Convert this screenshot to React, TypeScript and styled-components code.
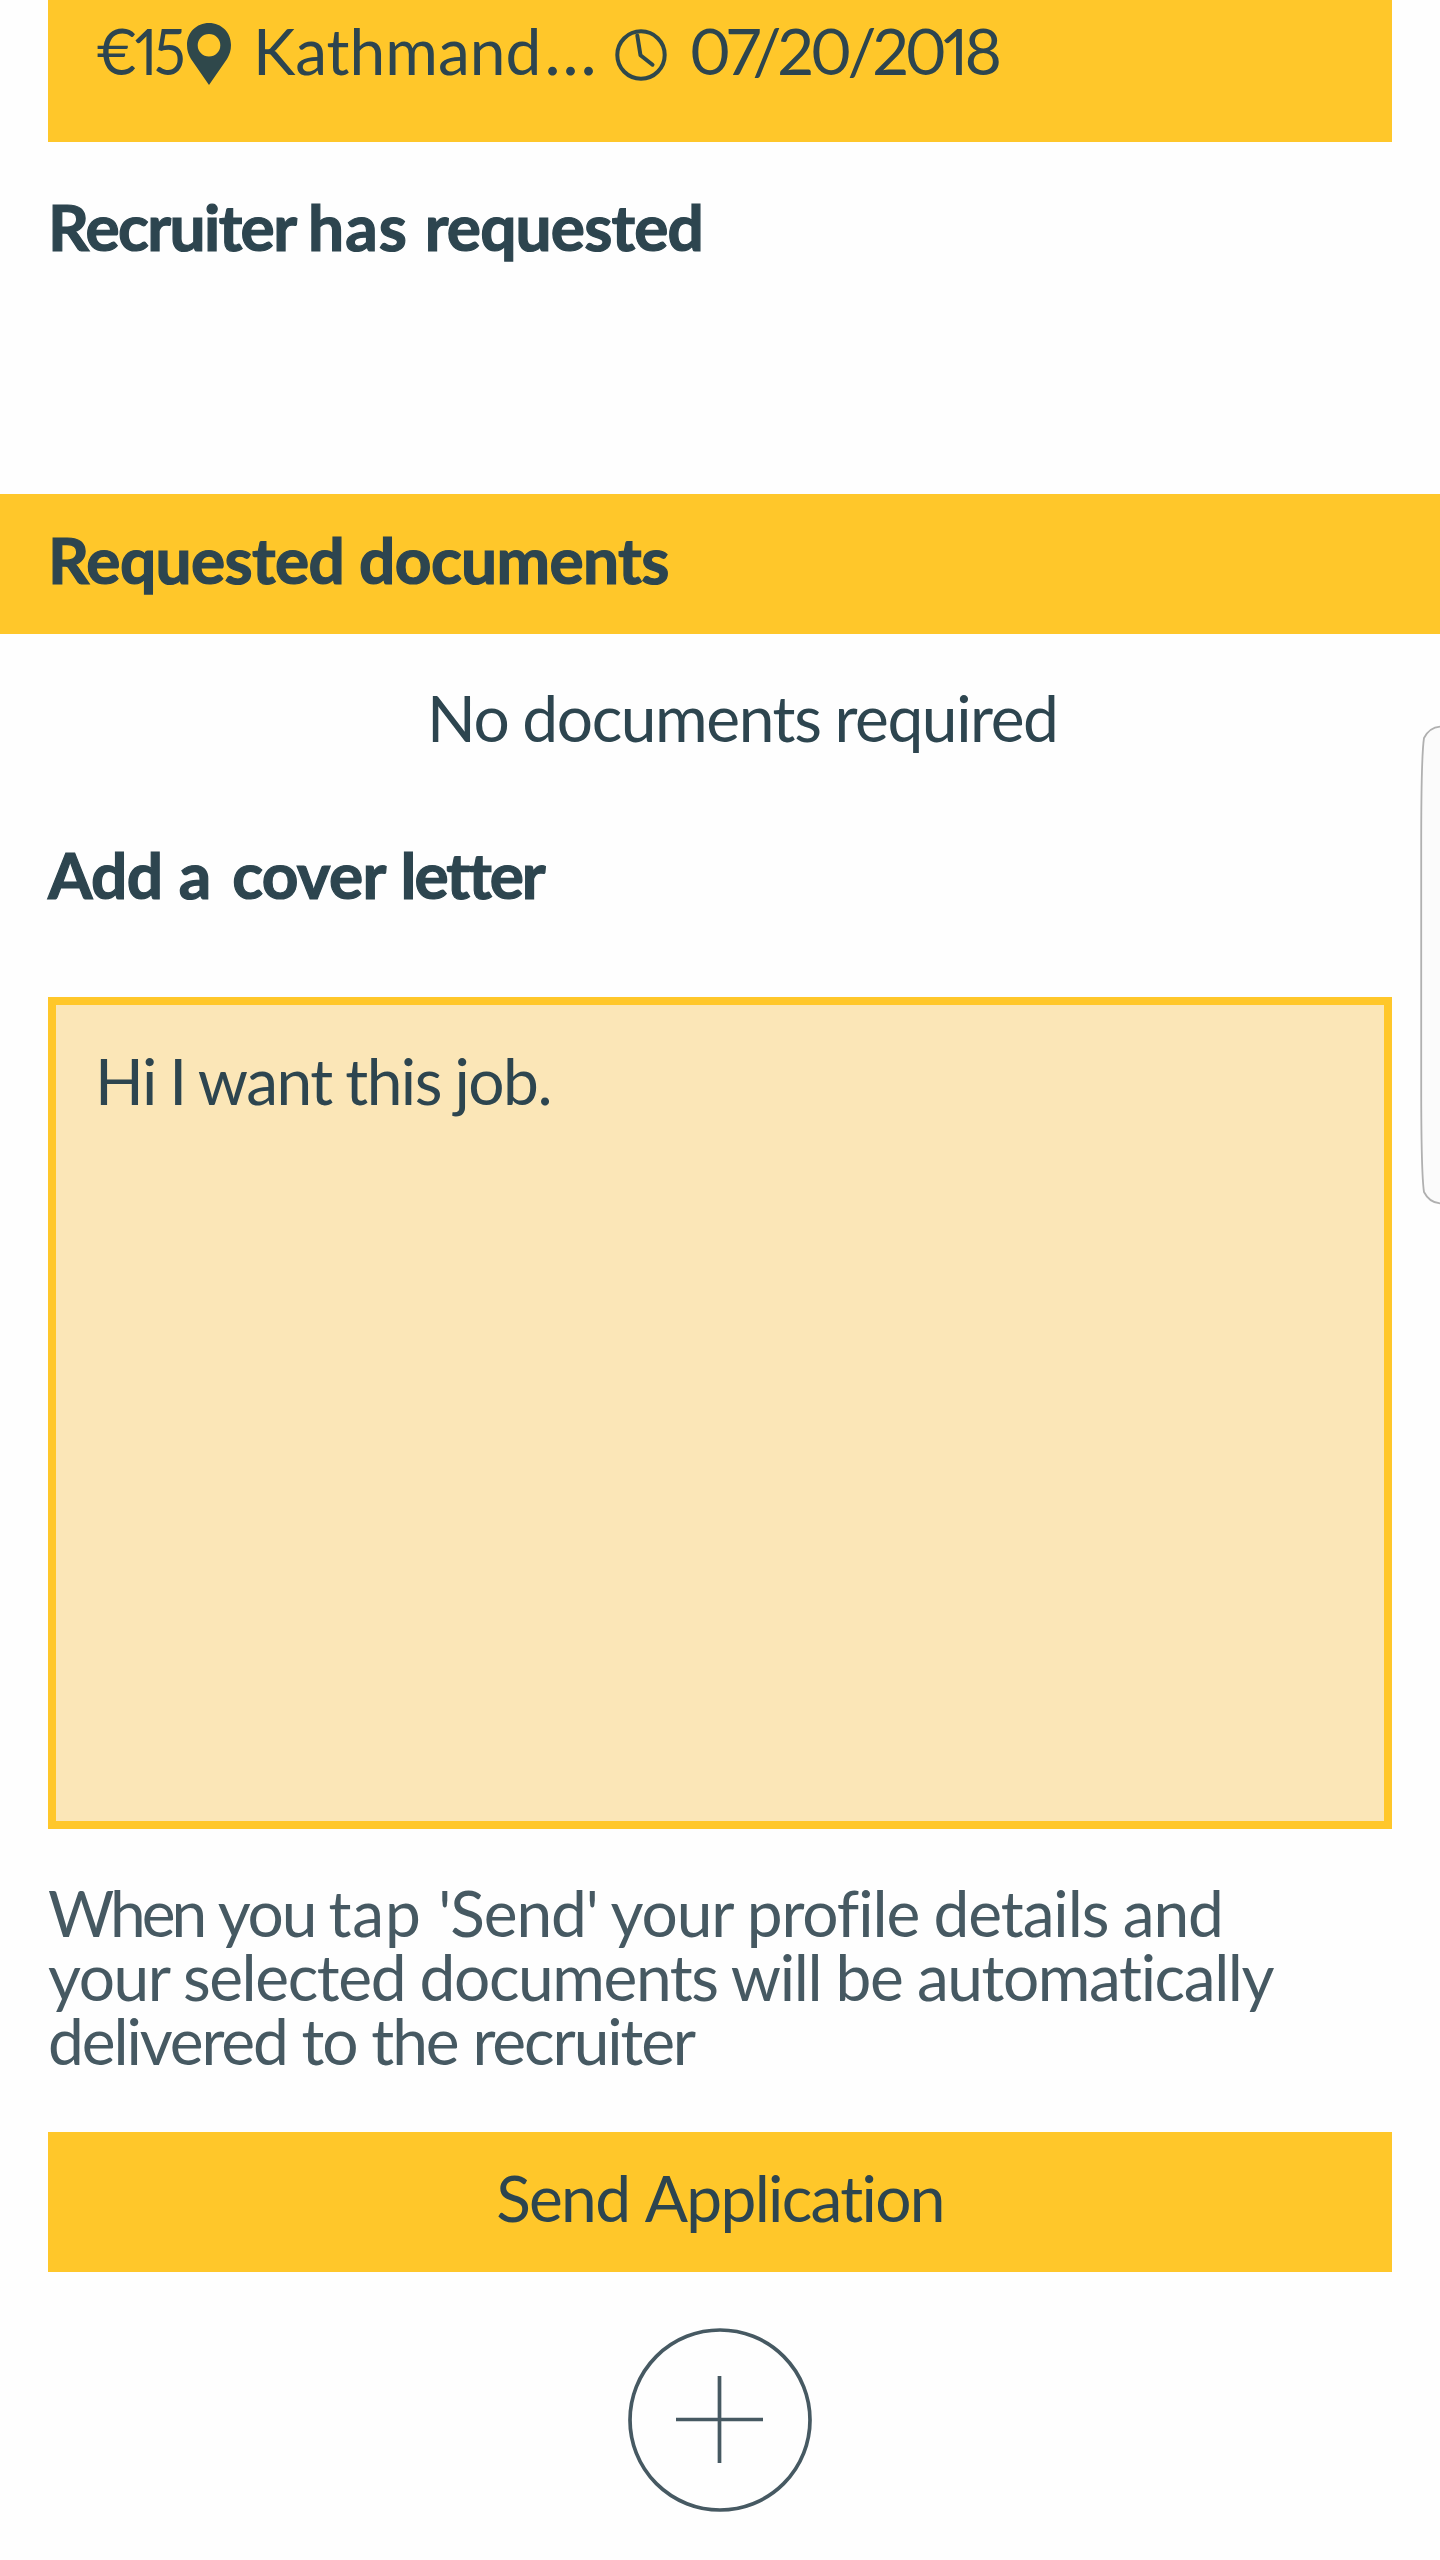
import React from "react";
import styled, { createGlobalStyle } from "styled-components";

const yellow = "#ffc72a";
const ink = "#2d454f";
const slate = "#465962";

const GlobalStyle = createGlobalStyle`
  * { box-sizing: border-box; }
  body { margin: 0; background: #fefefe; }
`;

const Screen = styled.main`
  position: relative;
  display: flex;
  flex-direction: column;
  width: 1440px;
  height: 2560px;
  overflow: hidden;
  background: #fefefe;
  color: ${ink};
  font-family: Lato, "Open Sans", sans-serif;
  font-size: 64px;
  line-height: 64px;
  font-variant-ligatures: none;
  font-variant-numeric: proportional-nums;
`;

const Run = styled.span<{ $track?: number; $gap?: number }>`
  display: block;
  white-space: pre;
  letter-spacing: ${(p) => p.$track ?? 0}px;
  word-spacing: ${(p) => p.$gap ?? 0}px;
`;

const Part = styled.span<{ $track: number }>`
  letter-spacing: ${(p) => p.$track}px;
`;

const Dots = styled.span`
  padding-left: 3px;
  font-size: 70px;
  line-height: 0;
`;

const JobCard = styled.section`
  display: flex;
  align-items: flex-start;
  height: 142px;
  margin: 0 48px;
  padding: 19px 48px 0;
  background: ${yellow};
`;

const Price = styled.div`
  width: 91px;
  transform: scaleX(0.91);
  transform-origin: -10px 0;
`;

const Place = styled.div`
  display: flex;
  width: 428px;
`;

const PlaceName = styled.div`
  padding-left: 22px;
`;

const DateBox = styled.div`
  display: flex;
  gap: 22px;
`;

const PinIcon = styled.svg`
  flex: none;
  width: 44px;
  height: 62px;
  margin-top: 4px;
`;

const ClockIcon = styled.svg`
  flex: none;
  width: 52px;
  height: 52px;
  margin-top: 10px;
`;

const Heading = styled.h2`
  margin: 0;
  padding: 53px 48px 0;
  font-size: 64px;
  font-weight: 700;
  -webkit-text-stroke: 1.2px ${ink};
`;

const Band = styled.h2`
  height: 140px;
  margin: 235px 0 0;
  padding: 34px 48px 0;
  background: ${yellow};
  font-size: 64px;
  font-weight: 700;
  -webkit-text-stroke: 1.2px ${ink};
`;

const Empty = styled.p`
  display: flex;
  margin: 0;
  padding: 52px 0 40px 427px;
`;

const Letter = styled.div`
  height: 832px;
  margin: 90px 48px 0;
  padding: 44px 39px;
  border: 8px solid ${yellow};
  background: #fbe6b7;
`;

const Note = styled.p`
  margin: 52px 48px 0;
  color: ${slate};
`;

const SendButton = styled.button`
  display: flex;
  justify-content: center;
  height: 140px;
  margin: 59px 48px 0;
  padding: 34px 0 0;
  border: 0;
  background: ${yellow};
  color: ${ink};
  font: inherit;
`;

const AddButton = styled.button`
  align-self: center;
  width: 184px;
  height: 184px;
  margin: 56px 0 0;
  padding: 0;
  border: 0;
  background: none;

  svg { display: block; }
`;

const EdgeHandle = styled.svg`
  position: absolute;
  top: 725px;
  right: 0;
  width: 20px;
  height: 480px;
`;

export default function App() {
  return (
    <>
      <GlobalStyle />
      <Screen>
        <JobCard>
          <Price><Run $track={-4}>€15</Run></Price>
          <Place>
            <PinIcon viewBox="0 0 44 62">
              <path
                fill="#2f484b"
                fillRule="evenodd"
                d="M22 0C9.500 0 0 9.500 0 22c0 5.500 1.500 9.500 4 14l18 26 18-26c2.500-4.500 4-8.500 4-14C44 9.500 34.500 0 22 0Zm0 11a11.300 11.300 0 1 1 0 22.600 11.300 11.300 0 0 1 0-22.600Z"
              />
            </PinIcon>
            <PlaceName><Run>Kathmand<Dots>…</Dots></Run></PlaceName>
          </Place>
          <DateBox>
            <ClockIcon viewBox="0 0 52 52" fill="none" stroke="#2f484b" strokeWidth="4">
              <circle cx="26" cy="26" r="23.700" />
              <path d="m22.300 6.500 3.200 19.700 12 9.500" strokeLinecap="round" strokeLinejoin="round" />
            </ClockIcon>
            <Run $track={-3.9}>07/20/2018</Run>
          </DateBox>
        </JobCard>

        <Heading>
          <Run $track={-0.85}><Part $track={-1.6}>Recruiter </Part><Part $track={1.1}>has </Part>requested</Run>
        </Heading>
        <Band><Run $track={-0.64}>Requested documents</Run></Band>
        <Empty><Run $track={-1.4} $gap={-1}>No documents required</Run></Empty>
        <Heading>
          <Run $track={-0.7} $gap={1.5}>Add <Part $track={2}>a </Part>cover <Part $track={-2}>letter</Part></Run>
        </Heading>

        <Letter><Run $track={-1.5} $gap={-1.4}>Hi I want this job.</Run></Letter>

        <Note>
          <Run $track={-1.1} $gap={-0.8}>
            <Part $track={-4}>When</Part> <Part $track={-2.2}>you </Part><Part $track={0.9}>tap </Part>'Send' your profile details and
          </Run>
          <Run $track={-1.4} $gap={-0.5}>your selected documents will be automatically</Run>
          <Run $track={-2.1} $gap={0.6}>delivered to the recruiter</Run>
        </Note>

        <SendButton><Run $track={-1.7} $gap={3}>Send Application</Run></SendButton>
        <AddButton aria-label="Add">
          <svg width="184" height="184" viewBox="0 0 184 184" fill="none" stroke={slate} strokeWidth="3.700">
            <circle cx="92" cy="92" r="90" />
            <path d="M91.500 48v87M48 91.500h87" />
          </svg>
        </AddButton>

        <EdgeHandle viewBox="0 0 20 480">
          <path
            d="M22 1.500C14 1.500 8 5 4 13 2 26 1.200 70 1.200 120V360C1.200 410 2 454 4 467 8 475 14 478.500 22 478.500Z"
            fill="#fbfbfb"
            stroke="#b0b0b0"
            strokeWidth="1.800"
          />
        </EdgeHandle>
      </Screen>
    </>
  );
}
